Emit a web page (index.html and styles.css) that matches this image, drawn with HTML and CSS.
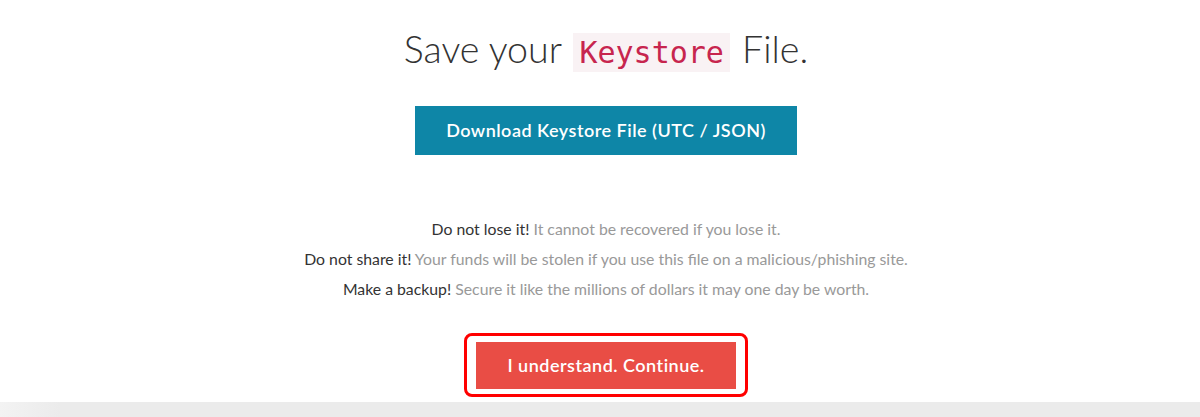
FILE: index.html
```html
<!DOCTYPE html>
<html lang="en">
<head>
    <meta charset="UTF-8">
    <meta name="viewport" content="width=device-width, initial-scale=1.0">
    <title>Save your Keystore File</title>
    <link rel="stylesheet" href="styles.css">
</head>
<body>
    <div class="panel">
        <h1>Save your <code>Keystore</code> File.</h1>

        <a class="btn btn-download" href="#">Download Keystore File (UTC / JSON)</a>

        <div class="warnings">
            <p><strong>Do not lose it!</strong> It cannot be recovered if you lose it.</p>
            <p><strong>Do not share it!</strong> Your funds will be stolen if you use this file on a malicious/phishing site.</p>
            <p><strong>Make a backup!</strong> Secure it like the millions of dollars it may one day be worth.</p>
        </div>

        <div class="continue-wrap">
            <a class="btn btn-continue" href="#">I understand. Continue.</a>
        </div>
    </div>
    <div class="footer-band"></div>
</body>
</html>
```

FILE: styles.css
```css
body {
    margin: 0;
    font-family: Lato, "Open Sans", sans-serif;
    color: #333;
    background: #fff;
}
.panel {
    display: flex;
    flex-direction: column;
    align-items: center;
    padding: 27px 0 0 12px;
    height: 375px;
}
h1 {
    margin: 0;
    font-size: 37.6px;
    font-weight: 300;
    line-height: 44px;
    color: #333;
}
h1 code {
    font-family: "DejaVu Sans Mono", "Liberation Mono", monospace;
    font-size: 30px;
    color: #c7254e;
    background-color: #f9f2f4;
    padding: 2px 6px;
    margin: 0 2px;
}
.btn {
    display: inline-block;
    color: #fff;
    text-decoration: none;
    font-size: 18px;
    font-weight: 600;
    letter-spacing: 0.5px;
    text-align: center;
}
.btn-download {
    margin-top: 31px;
    width: 382px;
    line-height: 49px;
    background-color: #0e86a7;
}
.warnings {
    margin-top: 59px;
    text-align: center;
    font-size: 15.8px;
    color: #999;
}
.warnings p {
    margin: 0;
    line-height: 30px;
}
.warnings strong {
    font-weight: 400;
    color: #333;
}
.continue-wrap {
    margin-top: 29px;
    border: 3px solid #f00;
    border-radius: 8px;
    padding: 6px 9px 5px;
}
.btn-continue {
    display: block;
    width: 260px;
    line-height: 47px;
    background-color: #e94d45;
}
.footer-band {
    height: 15px;
    background: linear-gradient(to right, #f3f3f3, #ebebeb 60px);
}
```
